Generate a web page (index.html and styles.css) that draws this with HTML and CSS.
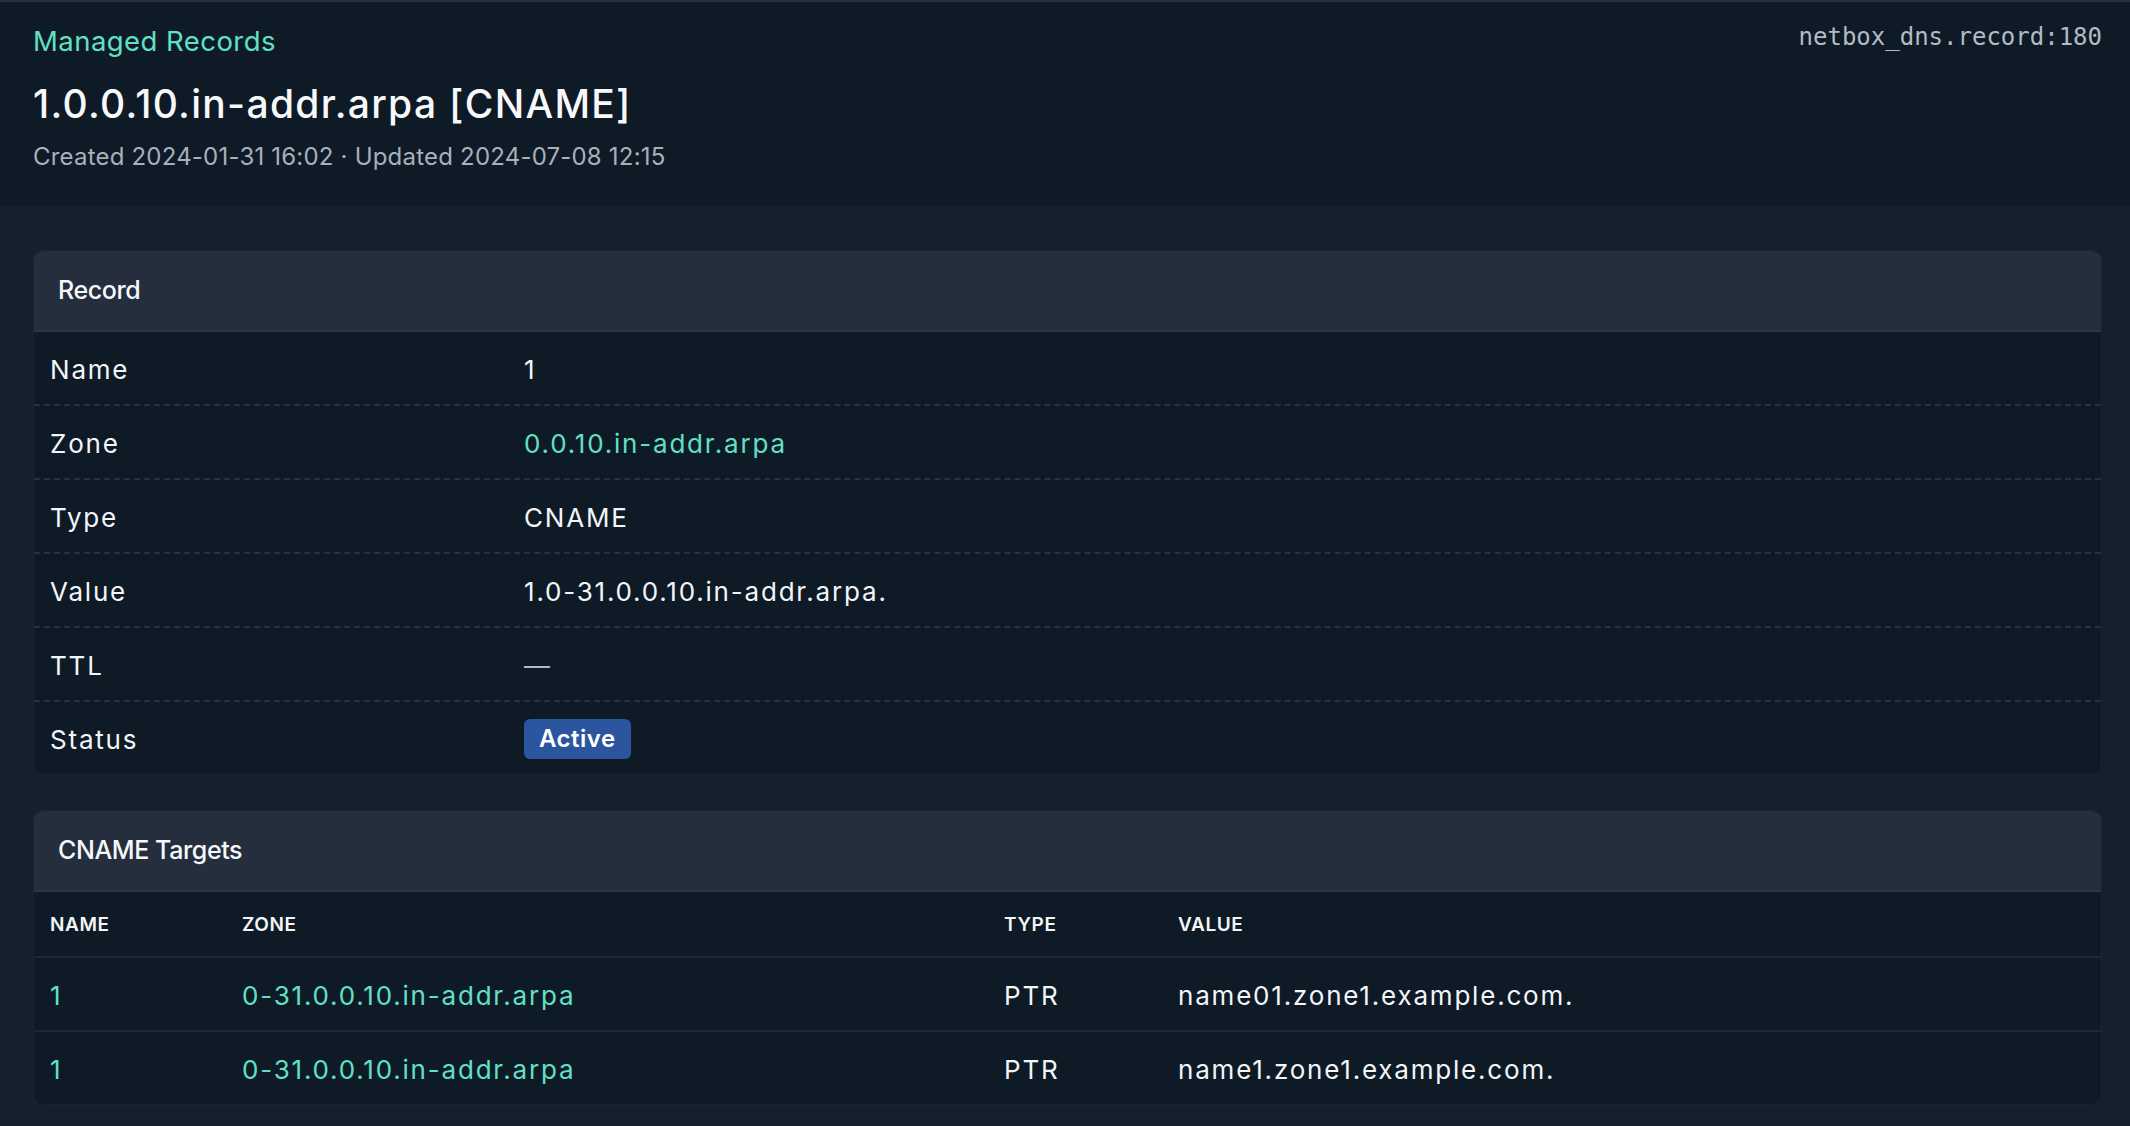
FILE: index.html
```html
<!DOCTYPE html>
<html lang="en">
<head>
<meta charset="utf-8">
<title>1.0.0.10.in-addr.arpa [CNAME]</title>
<link rel="stylesheet" href="styles.css">
</head>
<body>
<header class="page-header">
  <div class="titles">
    <a class="crumb" href="#">Managed Records</a>
    <h1 class="title">1.0.0.10.in-addr.arpa [CNAME]</h1>
    <div class="meta">Created 2024-01-31 16:02 · Updated 2024-07-08 12:15</div>
  </div>
  <code class="ident">netbox_dns.record:180</code>
</header>
<main class="content">
  <section class="card">
    <div class="card-head">Record</div>
    <div class="props">
      <div class="prop"><div class="prop-label">Name</div><div class="prop-value">1</div></div>
      <div class="prop"><div class="prop-label">Zone</div><div class="prop-value"><a class="link" href="#">0.0.10.in-addr.arpa</a></div></div>
      <div class="prop"><div class="prop-label">Type</div><div class="prop-value">CNAME</div></div>
      <div class="prop"><div class="prop-label">Value</div><div class="prop-value">1.0-31.0.0.10.in-addr.arpa.</div></div>
      <div class="prop"><div class="prop-label">TTL</div><div class="prop-value muted">—</div></div>
      <div class="prop"><div class="prop-label">Status</div><div class="prop-value"><span class="badge">Active</span></div></div>
    </div>
  </section>
  <section class="card">
    <div class="card-head">CNAME Targets</div>
    <table class="targets">
      <colgroup>
        <col class="col-name">
        <col class="col-zone">
        <col class="col-type">
        <col class="col-value">
      </colgroup>
      <thead>
        <tr><th>Name</th><th>Zone</th><th>Type</th><th>Value</th></tr>
      </thead>
      <tbody>
        <tr><td><a class="link" href="#">1</a></td><td><a class="link" href="#">0-31.0.0.10.in-addr.arpa</a></td><td>PTR</td><td>name01.zone1.example.com.</td></tr>
        <tr><td><a class="link" href="#">1</a></td><td><a class="link" href="#">0-31.0.0.10.in-addr.arpa</a></td><td>PTR</td><td>name1.zone1.example.com.</td></tr>
      </tbody>
    </table>
  </section>
</main>
</body>
</html>
```
FILE: styles.css
```css
html, body {
  margin: 0;
  padding: 0;
}
body {
  background: #16202c;
  color: #f3f5f8;
  font-family: Inter, "Noto Sans", "Liberation Sans", sans-serif;
}
a {
  text-decoration: none;
}
.page-header {
  display: flex;
  justify-content: space-between;
  align-items: flex-start;
  background: #0e1a25;
  border-top: 2px solid #262f3e;
  padding: 21px 28px 33px 33px;
}
.titles {
  display: flex;
  flex-direction: column;
}
.crumb {
  color: #61e0c5;
  font-size: 27.5px;
  line-height: 36px;
  letter-spacing: 0.45px;
}
.title {
  margin: 20px 0 0;
  font-size: 39px;
  line-height: 50px;
  font-weight: 500;
  letter-spacing: 1.3px;
  color: #f7f8fa;
}
.meta {
  margin-top: 12px;
  font-size: 24px;
  line-height: 32px;
  letter-spacing: 0.2px;
  color: #a8b0bc;
}
.ident {
  font-family: "DejaVu Sans Mono", "Liberation Mono", monospace;
  font-size: 24px;
  color: #b3bac4;
}
.content {
  display: flex;
  flex-direction: column;
  gap: 35px;
  padding: 44px 28px 23px 33px;
}
.card {
  background: #0e1a25;
  border: 1px solid #1a2532;
  border-radius: 10px;
  overflow: hidden;
}
.card-head {
  box-sizing: border-box;
  height: 81px;
  display: flex;
  align-items: center;
  padding: 0 24px 2px;
  background: #252e3d;
  border-bottom: 2px solid #2c3747;
  font-size: 25px;
  font-weight: 500;
  letter-spacing: -0.4px;
  color: #f5f7fa;
}
.prop {
  box-sizing: border-box;
  display: grid;
  grid-template-columns: 473px 1fr;
  align-items: center;
  height: 74px;
  padding-top: 2px;
  border-bottom: 2px dashed #263141;
  font-size: 26px;
  letter-spacing: 1.8px;
}
.prop:last-child {
  height: 72px;
  border-bottom: none;
}
.prop-label {
  padding-left: 16px;
}
.prop-value {
  padding-left: 17px;
}
.muted {
  color: #b3bac4;
}
.link {
  color: #61e0c5;
}
.badge {
  display: inline-block;
  height: 40px;
  line-height: 40px;
  padding: 0 15px;
  border-radius: 6px;
  background: #2b559e;
  color: #ffffff;
  font-size: 24px;
  font-weight: 600;
  letter-spacing: 0.5px;
  vertical-align: middle;
}
.targets {
  width: 100%;
  border-collapse: collapse;
  table-layout: fixed;
}
.col-name { width: 192px; }
.col-zone { width: 762px; }
.col-type { width: 174px; }
.targets th {
  height: 64px;
  padding: 0 0 0 16px;
  text-align: left;
  font-size: 19px;
  font-weight: 600;
  text-transform: uppercase;
  letter-spacing: 0.6px;
  border-bottom: 2px solid #1e2938;
}
.targets td {
  height: 70px;
  padding: 2px 0 0 16px;
  font-size: 26px;
  letter-spacing: 1.8px;
  border-bottom: 2px solid #1e2938;
}
.targets tbody tr:last-child td {
  border-bottom: none;
}
```
